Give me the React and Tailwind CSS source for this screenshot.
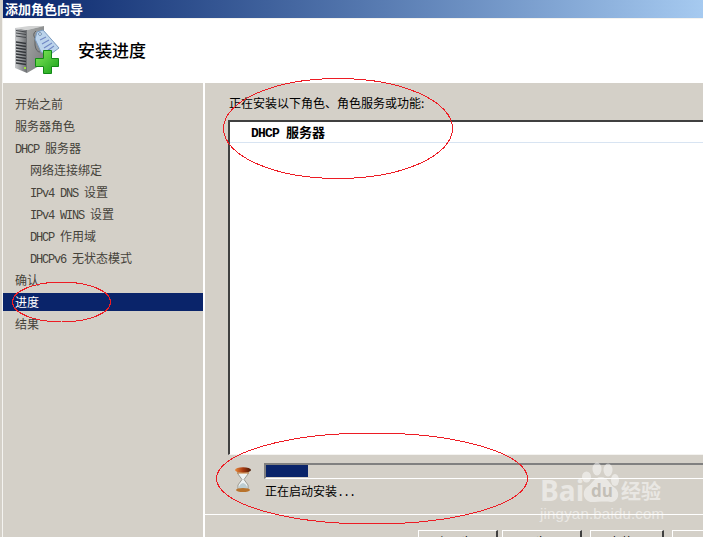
const cjk = { fontFamily: '"Noto Sans CJK SC", sans-serif' };

// half-width latin runs, the original font has 6px wide latin glyphs
function M({ children }) {
  return <span className="font-['Liberation_Mono',monospace] tracking-[-1.2px]">{children}</span>;
}

function ServerIcon() {
  return (
    <svg width="46" height="50" viewBox="0 0 46 50">
      <defs>
        <linearGradient id="front" x1="0" x2="1" y1="0" y2="0">
          <stop offset="0" stopColor="#c8cacc" />
          <stop offset="1" stopColor="#6a6d70" />
        </linearGradient>
        <linearGradient id="side" x1="0" x2="1" y1="0" y2="1">
          <stop offset="0" stopColor="#a6a8a8" />
          <stop offset="1" stopColor="#77797a" />
        </linearGradient>
        <linearGradient id="plus" x1="0" x2="1" y1="0" y2="1">
          <stop offset="0" stopColor="#84ea5c" />
          <stop offset="1" stopColor="#17a018" />
        </linearGradient>
      </defs>
      <path d="M0 3 L12 5 L12 48 L0 43 Z" fill="url(#front)" />
      <path d="M0 3 L14 1 L29 1 L12 5 Z" fill="#d2d3d3" />
      <path d="M12 5 L29 1 L29 38 L12 48 Z" fill="url(#side)" />
      <path d="M1 5.5 L11 7 M1 8 L11 9.5 M1 11 L11 12.5" stroke="#45484c" strokeWidth="1" />
      <path d="M1 17 L11 18.5 M1 20 L11 21.5 M1 23 L11 24.5 M1 26 L11 27.5 M1 29 L11 30.5 M1 32 L11 33.5 M1 35 L11 36.5 M1 38 L11 39.5" stroke="#34373b" strokeWidth="1.3" />
      <rect x="9" y="42" width="2" height="2" fill="#9be23c" />
      <path d="M21 6 Q17 9 20 13 L20 20 Q21 27 25 27" stroke="#5f6264" fill="none" />
      <path d="M22 7 L28 5 L44 23 L33 31 L26 27 L20 14 Z" fill="#bcd4ec" stroke="#7c9cc0" />
      <circle cx="25" cy="9" r="1.4" fill="#fff" stroke="#6c8cb0" />
      <path d="M25 15 L31 12 M27 19 L34 15 M29 23 L37 18 M32 26 L39 21" stroke="#7288c4" strokeWidth="1.1" />
      <path d="M20.5 33.5 H28.5 V25.5 H36.5 V33.5 H43.5 V41.5 H36.5 V48.5 H28.5 V41.5 H20.5 Z" fill="url(#plus)" stroke="#128a16" />
    </svg>
  );
}

function Hourglass() {
  return (
    <svg width="18" height="26" viewBox="0 0 18 26">
      <defs>
        <linearGradient id="cap" x1="0" x2="1" y1="0" y2="0">
          <stop offset="0" stopColor="#e88a3c" />
          <stop offset="0.5" stopColor="#a83a10" />
          <stop offset="1" stopColor="#4a1a06" />
        </linearGradient>
      </defs>
      <path d="M4 5 L14 5 L14 7 L10 12.5 L14 18 L14 22 L4 22 L4 18 L8 12.5 L4 7 Z" fill="#eef2f2" stroke="#7c7c74" strokeWidth="0.7" />
      <path d="M4.5 22 Q5 17 9 16 Q13 17 13.5 22 Z" fill="#bccdd2" />
      <ellipse cx="9" cy="3" rx="8" ry="2.8" fill="url(#cap)" />
      <path d="M3 6 H15" stroke="#c87a30" />
      <ellipse cx="9" cy="23" rx="7" ry="2" fill="#b8732c" />
    </svg>
  );
}

function Watermark() {
  return (
    <div className="absolute left-[539px] top-[460px] w-[130px] h-[62px] opacity-50 text-white">
      <svg className="absolute left-0 top-0" width="90" height="46" viewBox="0 0 90 46">
        <ellipse cx="47.5" cy="17" rx="4.5" ry="5.5" fill="#fff" />
        <ellipse cx="58" cy="9" rx="4.5" ry="6.5" fill="#fff" />
        <ellipse cx="69" cy="10" rx="4.5" ry="6.5" fill="#fff" />
        <ellipse cx="76" cy="20" rx="4" ry="6" fill="#fff" />
        <path d="M62 17 C55 17 53 24 48 27 C42 32 45 42 53 42 C58 42 66 41 72 42 C79 42 82 33 76 28 C70 24 69 17 62 17 Z" fill="#fff" />
      </svg>
      <span className="absolute left-[1px] top-[16px] text-[28px] leading-[28px] font-bold font-['Open_Sans',sans-serif]">Bai</span>
      <span className="absolute left-[52px] top-[21px] text-[17px] leading-[20px] font-bold text-[#b4b0a8] font-['Open_Sans',sans-serif]">du</span>
      <span className="absolute left-[82px] top-[19px] text-[20px] leading-[24px] font-bold whitespace-nowrap" style={cjk}>经验</span>
      <span className="absolute left-[1px] top-[45px] text-[15px] leading-[17px] tracking-[0.2px] whitespace-nowrap font-['Liberation_Sans',sans-serif]">jingyan.baidu.com</span>
    </div>
  );
}

function Annotations() {
  return (
    <svg className="absolute inset-0 pointer-events-none" width="703" height="537" viewBox="0 0 703 537" fill="none" stroke="#ed1c24" strokeWidth="1" shapeRendering="crispEdges">
      <ellipse cx="338" cy="128.5" rx="114.5" ry="50" />
      <ellipse cx="61.5" cy="302" rx="49" ry="20" />
      <ellipse cx="372" cy="478.5" rx="155.5" ry="45.5" />
    </svg>
  );
}

function NavItem({ children, indent, active }) {
  return (
    <div className={`h-[18px] leading-[18px] shrink-0 whitespace-nowrap ${indent ? "pl-[27px]" : "pl-3"} ${active ? "bg-[#0a246a] text-white" : "text-[#45423a]"}`}>
      {children}
    </div>
  );
}

function Btn({ w, mr, children }) {
  return (
    <div
      className={`h-[23px] shrink-0 border-t border-l border-white border-r-2 border-r-[#404040] text-center text-black leading-[22px] ${w} ${mr}`}
    >
      {children}
    </div>
  );
}

export default function App() {
  return (
    <div className="relative w-[703px] h-[537px] overflow-hidden bg-[#d4d0c8] text-[12px] flex flex-col" style={cjk}>
      {/* Title bar */}
      <div className="h-[18px] shrink-0 ml-[3px] pl-[2px] bg-gradient-to-r from-[#0a246a] to-[#a6caf0] text-white font-bold text-[13px] leading-[17px]">
        添加角色向导
      </div>

      <div className="flex-1 min-h-0 ml-[2px] border-l border-t border-[#f4f3f0] flex flex-col">
        {/* Header */}
        <div className="h-[64px] shrink-0 bg-white flex items-center">
          <div className="ml-[12px] w-[63px] mt-[-3px]">
            <ServerIcon />
          </div>
          <div className="text-[17px] font-medium text-black leading-[20px] mt-[-2px]">安装进度</div>
        </div>

        <div className="flex-1 min-h-0 flex">
          {/* Left nav */}
          <div className="w-[200px] shrink-0 pt-[12px] flex flex-col gap-[4px]">
            <NavItem>开始之前</NavItem>
            <NavItem>服务器角色</NavItem>
            <NavItem><M>DHCP </M>服务器</NavItem>
            <NavItem indent>网络连接绑定</NavItem>
            <NavItem indent><M>IPv4 DNS </M>设置</NavItem>
            <NavItem indent><M>IPv4 WINS </M>设置</NavItem>
            <NavItem indent><M>DHCP </M>作用域</NavItem>
            <NavItem indent><M>DHCPv6 </M>无状态模式</NavItem>
            <NavItem>确认</NavItem>
            <NavItem active>进度</NavItem>
            <NavItem>结果</NavItem>
          </div>

          {/* Right panel */}
          <div className="flex-1 min-w-0 border-l-2 border-white flex flex-col">
            <div className="h-[37px] shrink-0 pl-[24px] pt-[11px] leading-[18px] text-black whitespace-nowrap">
              正在安装以下角色、角色服务或功能:
            </div>
            <div className="h-[335px] shrink-0 ml-[23px] bg-white border-t-2 border-l-2 border-[#404040] border-b border-b-[#f4f3f0]">
              <div className="h-[21px] border-b border-[#d8e4f2] pl-[21px] leading-[19px] font-bold text-[13px] text-black whitespace-nowrap">
                <span className="font-['Liberation_Mono',monospace] tracking-[-0.8px]">DHCP </span>服务器
              </div>
            </div>

            <div className="h-[60px] shrink-0 flex pl-[29px] pt-[8px] border-b border-white">
              <div className="w-[30px] shrink-0 pt-[4px]">
                <Hourglass />
              </div>
              <div className="flex-1 min-w-0">
                <div className="h-[16px] border-t-2 border-l-2 border-[#808080] border-b border-b-white">
                  <div className="w-[42px] h-[12px] bg-[#0a246a]" />
                </div>
                <div className="leading-[18px] pt-[3px] pl-[1px] text-black whitespace-nowrap">正在启动安装<M>...</M></div>
              </div>
            </div>

            {/* Buttons, cut off by the bottom of the picture */}
            <div className="pt-[15px] pl-[213px] flex">
              <Btn w="w-[80px]" mr="mr-[4px]">&lt; 上一步(P)</Btn>
              <Btn w="w-[80px]" mr="mr-[8px]">下一步(N) &gt;</Btn>
              <Btn w="w-[74px]" mr="mr-[8px]">安装(I)</Btn>
              <Btn w="w-[74px]" mr="">取消</Btn>
            </div>
          </div>
        </div>
      </div>

      <Watermark />
      <Annotations />
    </div>
  );
}
